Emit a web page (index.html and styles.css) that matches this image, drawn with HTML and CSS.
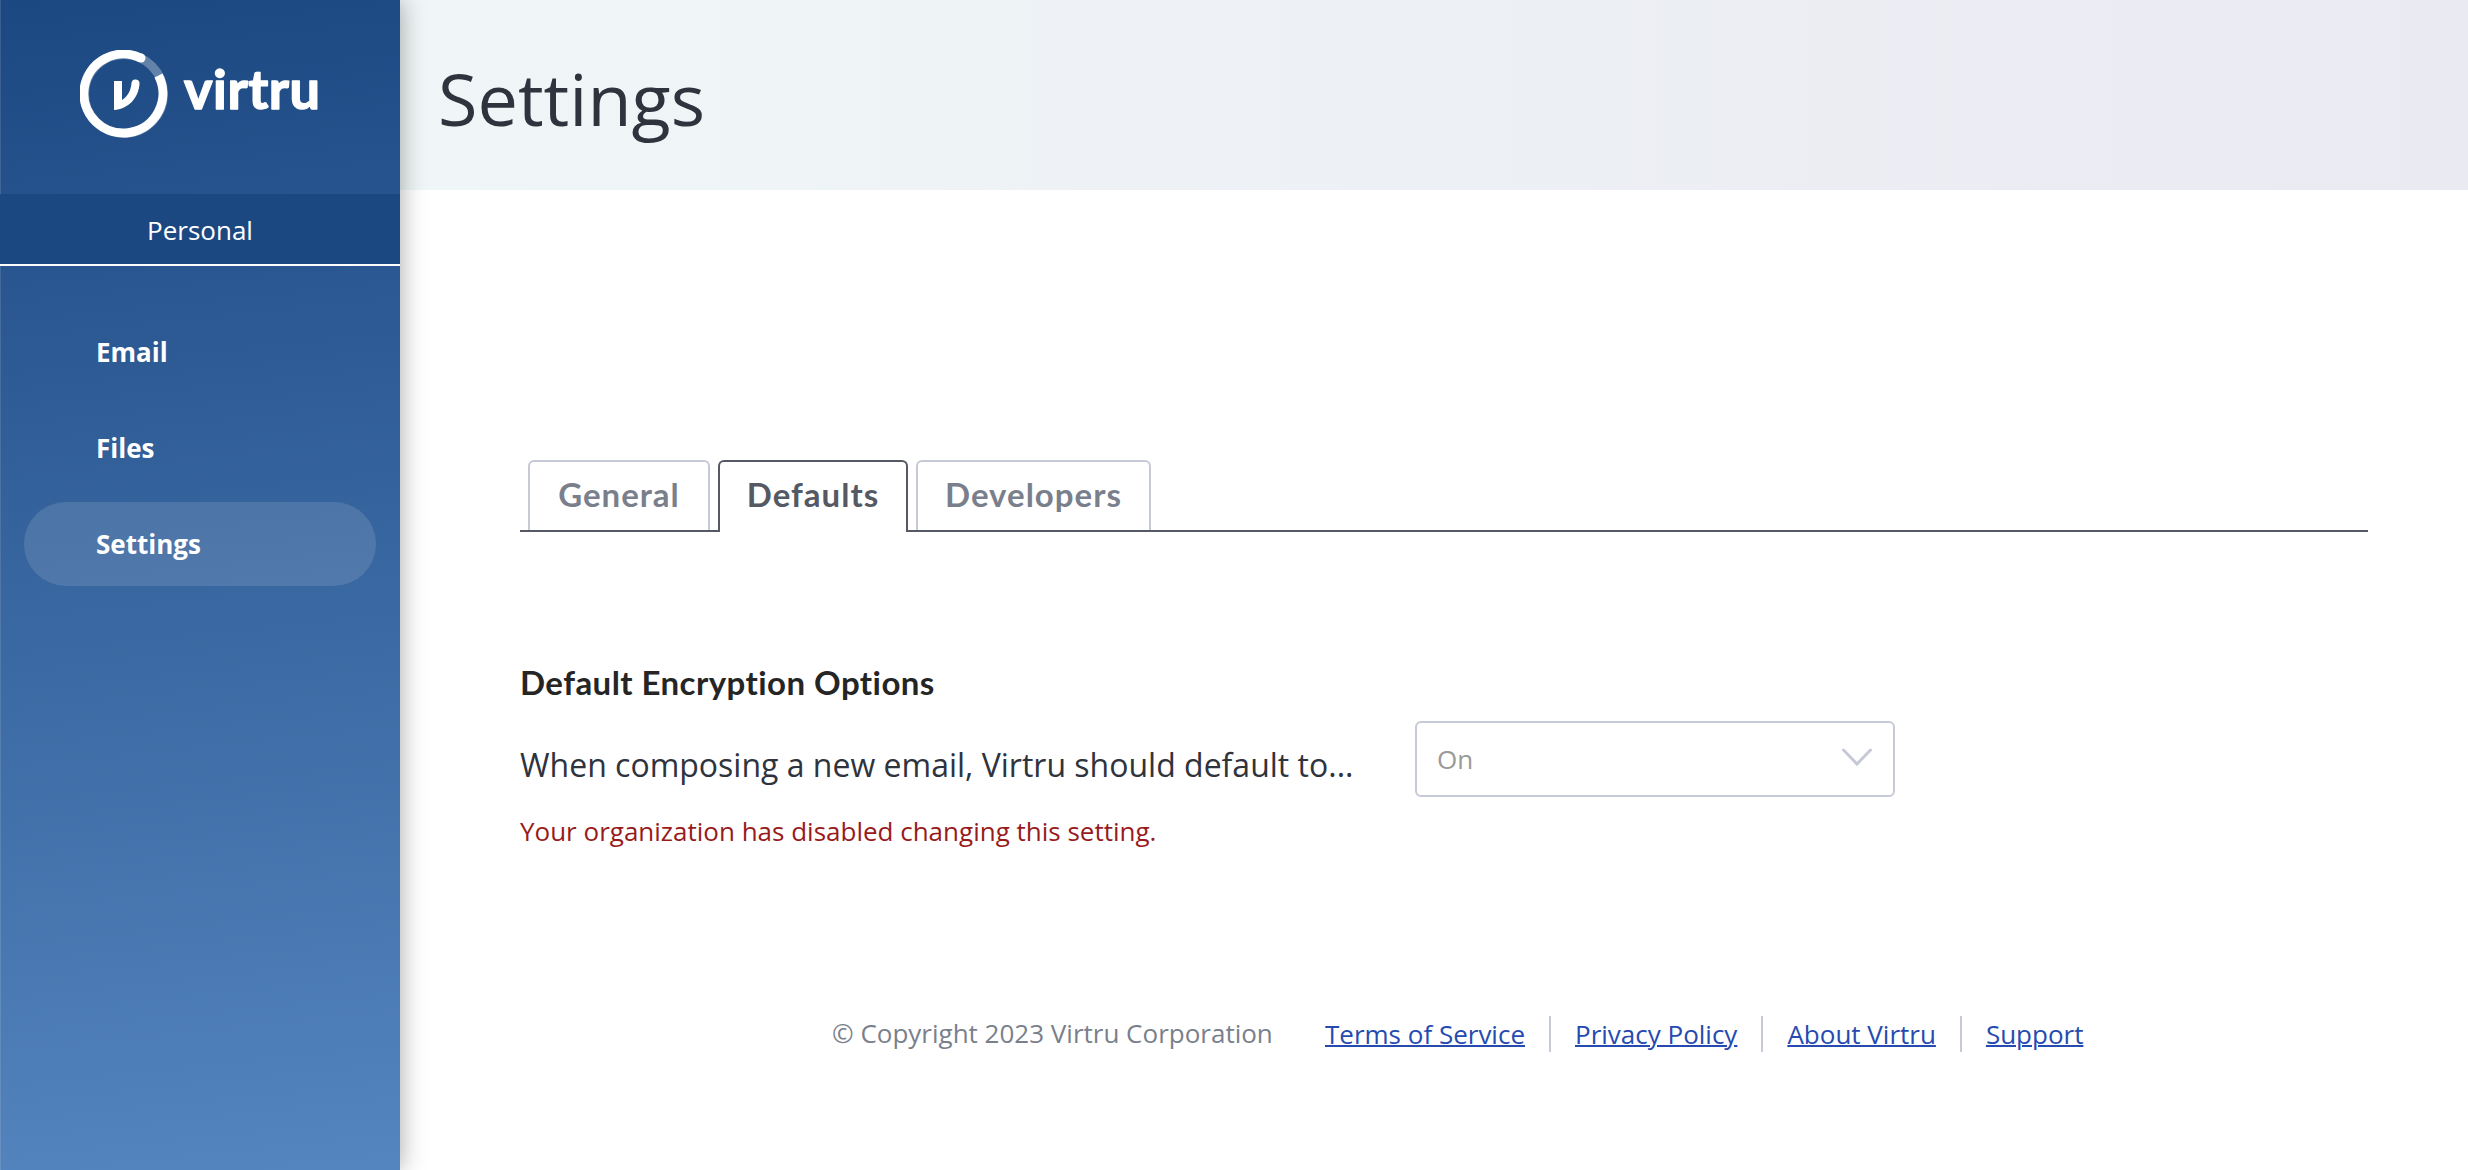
FILE: index.html
```html
<!DOCTYPE html>
<html lang="en">
<head>
  <title>Virtru – Settings</title>
  <meta charset="UTF-8">
  <meta name="viewport" content="width=device-width, initial-scale=1.0">
  <link rel="stylesheet" href="styles.css">
</head>
<body>
  <aside class="sidebar">
    <div class="logo">
      <svg width="244" height="92" viewBox="0 0 244 92">
        <circle class="ring-gap" cx="44" cy="44" r="39.5" />
        <path class="ring" d="M78.5 25.5 A39.5 39.5 0 1 1 61 8.2" />
        <circle cx="61" cy="8" r="4.5" fill="#fff" />
        <path fill="#fff" d="M34 31h8v19c6-4 9-10 9.500-17a4 4 0 0 1 8 1c-1 14-11 25-25.500 26z" />
        <text class="wordmark" x="104" y="58.500" textLength="136" lengthAdjust="spacing">virtru</text>
      </svg>
    </div>
    <div class="account">Personal</div>
    <nav class="side-nav">
      <a class="nav-item">Email</a>
      <a class="nav-item">Files</a>
      <a class="nav-item active">Settings</a>
    </nav>
  </aside>

  <main class="main">
    <header class="page-header">
      <h1>Settings</h1>
    </header>

    <section class="content">
      <div class="tabs">
        <button class="tab tab-general">General</button>
        <button class="tab tab-defaults selected">Defaults</button>
        <button class="tab tab-developers">Developers</button>
      </div>

      <h2>Default Encryption Options</h2>
      <div class="option">
        <div class="option-text">
          <p class="option-label">When composing a new email, Virtru should default to...</p>
          <p class="option-error">Your organization has disabled changing this setting.</p>
        </div>
        <div class="select">
          <span>On</span>
          <svg width="32" height="20" viewBox="0 0 32 20">
            <path d="M2.500 3 L16 17 L29.500 3" />
          </svg>
        </div>
      </div>
    </section>

    <footer class="footer">
      <span class="copyright">© Copyright 2023 Virtru Corporation</span>
      <ul class="links">
        <li><a href="#">Terms of Service</a></li>
        <li><a href="#">Privacy Policy</a></li>
        <li><a href="#">About Virtru</a></li>
        <li><a href="#">Support</a></li>
      </ul>
    </footer>
  </main>
</body>
</html>
```
FILE: styles.css
```css
* {
  box-sizing: border-box;
}
body {
  margin: 0;
  display: flex;
  height: 1170px;
  overflow: hidden;
  background: #fff;
  color: #2f333d;
  font-family: "Open Sans", sans-serif;
  font-size: 26px;
}
h1, h2, p, ul {
  margin: 0;
  padding: 0;
}

/* Sidebar */
.sidebar {
  position: relative;
  z-index: 1;
  flex: 0 0 400px;
  background: linear-gradient(174deg, #1c4882 0%, #5585be 100%);
  box-shadow: 0 0 24px rgba(0, 0, 0, 0.36), inset 1px 0 0 rgba(255, 255, 255, 0.12);
  color: #fff;
}
.logo {
  height: 194px;
  padding: 50px 0 0 80px;
}
.logo svg {
  display: block;
}
.ring, .ring-gap {
  fill: none;
  stroke: #fff;
  stroke-width: 9;
}
.ring-gap {
  stroke-opacity: 0.3;
}
.wordmark {
  font-family: Lato, sans-serif;
  font-size: 54px;
  font-weight: 700;
  fill: #fff;
  stroke: #fff;
  stroke-width: 1.5;
  stroke-linejoin: round;
}
.account {
  height: 72px;
  line-height: 72px;
  background: #1c4882;
  border-bottom: 2px solid #fff;
  text-align: center;
}
.side-nav {
  display: flex;
  flex-direction: column;
  gap: 12px;
  padding: 44px 24px 0;
}
.nav-item {
  height: 84px;
  line-height: 84px;
  padding-left: 72px;
  border-radius: 42px;
  font-weight: 700;
}
.nav-item.active {
  background: rgba(255, 255, 255, 0.12);
}

/* Page */
.main {
  flex: 1;
}
.page-header {
  height: 190px;
  padding: 49px 0 0 38px;
  background: linear-gradient(90deg, #f0f6f7 0%, #eaeaf2 100%);
}
.page-header h1 {
  font-size: 72px;
  font-weight: 400;
  line-height: 98px;
}
.content {
  padding: 270px 100px 0 120px;
}
.tabs {
  display: flex;
  gap: 8px;
  height: 72px;
  padding-left: 8px;
  border-bottom: 2px solid #555964;
}
.tab {
  height: 70px;
  padding: 0 0 4px;
  background: #fff;
  border: 2px solid #c6cad6;
  border-bottom: none;
  border-radius: 6px 6px 0 0;
  color: #7a7f8c;
  font-family: Lato, sans-serif;
  font-size: 33px;
  font-weight: 700;
  letter-spacing: 1px;
}
.tab-general {
  width: 182px;
}
.tab-defaults {
  width: 190px;
}
.tab-developers {
  width: 235px;
}
.tab.selected {
  height: 72px;
  padding-bottom: 6px;
  border-color: #555964;
  color: #555964;
}
h2 {
  margin-top: 130px;
  color: #252525;
  font-family: Lato, sans-serif;
  font-size: 33px;
  font-weight: 700;
  line-height: 40px;
  letter-spacing: 0.45px;
}
.option {
  display: flex;
  margin-top: 19px;
}
.option-text {
  width: 895px;
  padding-top: 22px;
  white-space: nowrap;
}
.option-label {
  font-size: 32px;
  line-height: 44px;
}
.option-error {
  margin-top: 26px;
  color: #981b1b;
  line-height: 36px;
}
.select {
  display: flex;
  align-items: center;
  justify-content: space-between;
  width: 480px;
  height: 76px;
  padding: 0 20px;
  border: 2px solid #c6cad6;
  border-radius: 6px;
  color: #999;
}
.select svg {
  margin-top: -5px;
}
.select path {
  fill: none;
  stroke: #c6cad6;
  stroke-width: 3;
  stroke-linecap: round;
}

/* Footer */
.footer {
  display: flex;
  align-items: center;
  margin-top: 167px;
  padding-left: 432px;
  white-space: nowrap;
}
.copyright {
  width: 469px;
  margin-top: -2px;
  color: #7a7f8c;
}
.links {
  display: flex;
  list-style: none;
}
.links li {
  height: 36px;
  padding: 0 24px;
  border-right: 2px solid #c6cad6;
  line-height: 36px;
}
.links li:last-child {
  border-right: none;
}
.links a {
  color: #254bb0;
  text-decoration-thickness: 2px;
}
```
